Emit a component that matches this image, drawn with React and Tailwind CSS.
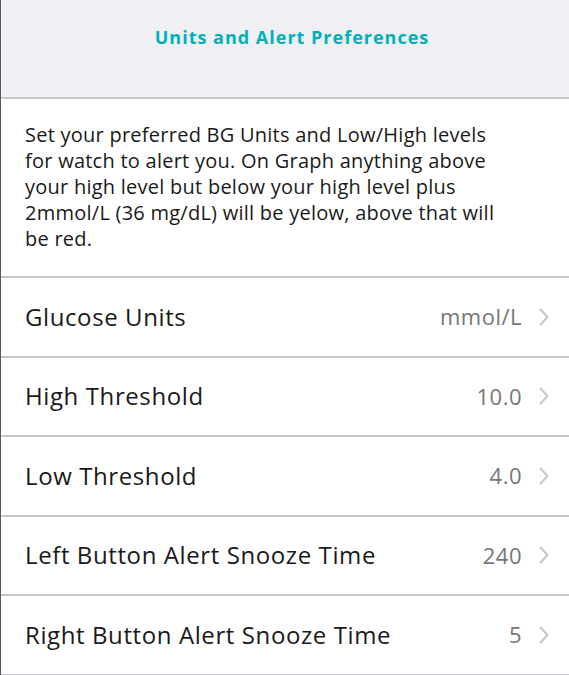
const rows = [
  { label: 'Glucose Units', value: 'mmol/L' },
  { label: 'High Threshold', value: '10.0' },
  { label: 'Low Threshold', value: '4.0' },
  { label: 'Left Button Alert Snooze Time', value: '240' },
  { label: 'Right Button Alert Snooze Time', value: '5' },
];

function Chevron() {
  return (
    <svg className="ml-[17px] w-[10px] h-[18px]" viewBox="0 0 10 18" fill="none">
      <polyline points="1.5,1.5 8.5,9 1.5,16.5" stroke="#c7c7cc" strokeWidth="2" strokeLinecap="round" strokeLinejoin="round" />
    </svg>
  );
}

export default function App() {
  return (
    <div className="h-[675px] w-[569px] overflow-hidden bg-white border-l border-[#5a5a5a] font-['Open_Sans',sans-serif] text-[#1a1a1a]">
      {/* Header */}
      <header className="h-[99px] bg-[#efeff4] border-b-2 border-[#c8c7cc] flex justify-center pt-[24px] pl-[14px]">
        <h1 className="text-[18px] font-bold tracking-[1px] text-[#00b1bb]">Units and Alert Preferences</h1>
      </header>

      {/* Description */}
      <p className="h-[179px] border-b-2 border-[#c8c7cc] pl-6 pr-2 pt-[23px] text-[20px] leading-[26px] tracking-[0.25px] whitespace-nowrap">
        Set your preferred BG Units and Low/High levels<br />
        for watch to alert you. On Graph anything above<br />
        your high level but below your high level plus<br />
        2mmol/L (36 mg/dL) will be yelow, above that will<br />
        be red.
      </p>

      {/* Settings rows */}
      {rows.map(({ label, value }) => (
        <div key={label} className="h-[79.5px] border-b-2 border-[#c8c7cc] flex items-center pl-6 pr-[20px]">
          <span className="flex-1 text-[24px] tracking-[0.6px]">{label}</span>
          <span className="text-[22px] tracking-[0.5px] text-[#777]">{value}</span>
          <Chevron />
        </div>
      ))}
    </div>
  );
}
